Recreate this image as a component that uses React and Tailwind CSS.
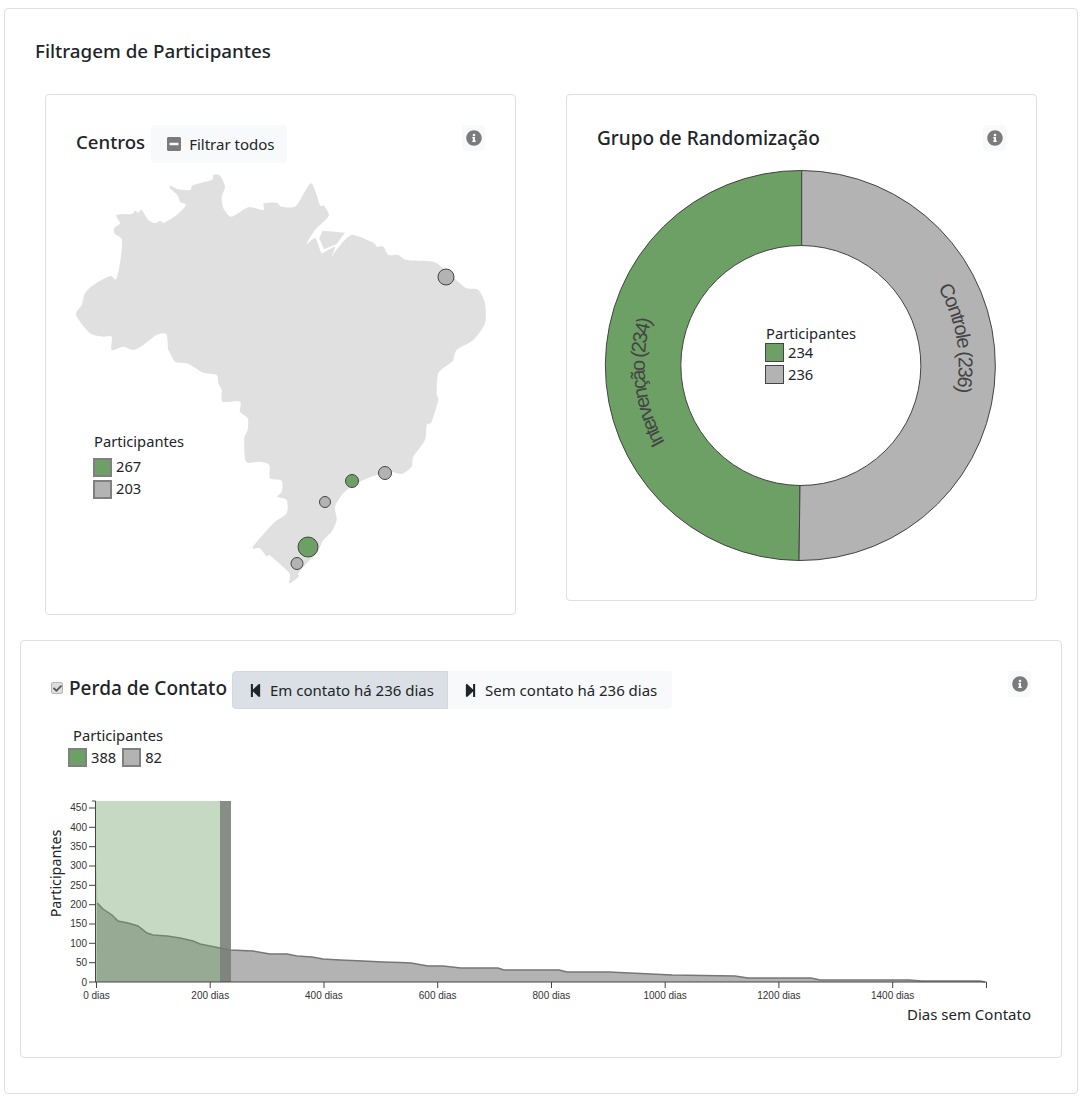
import React from "react";
import { FaInfoCircle, FaMinusSquare, FaStepBackward, FaStepForward, FaCheck } from "react-icons/fa";

const GREEN = "#6da064";
const GREY = "#b3b3b3";

const z1 = (pts) => pts.map(([x, y]) => [40 + x / 3, 90 + y / 3]);
const z2 = (pts) => pts.map(([x, y]) => [60 + x / 3, 350 + y / 3]);
const toStr = (pts) => pts.map(([x, y]) => `${x.toFixed(1)},${y.toFixed(1)}`).join(" ");

// Closed Catmull-Rom curve through the traced outline, so the coast is not faceted.
const smooth = (pts) => {
  const n = pts.length;
  let d = `M${pts[0][0].toFixed(1)},${pts[0][1].toFixed(1)}`;
  for (let i = 0; i < n; i++) {
    const p0 = pts[(i - 1 + n) % n], p1 = pts[i], p2 = pts[(i + 1) % n], p3 = pts[(i + 2) % n];
    const c1 = [p1[0] + (p2[0] - p0[0]) / 8, p1[1] + (p2[1] - p0[1]) / 8];
    const c2 = [p2[0] - (p3[0] - p1[0]) / 8, p2[1] - (p3[1] - p1[1]) / 8];
    d += ` C${c1[0].toFixed(1)},${c1[1].toFixed(1)} ${c2[0].toFixed(1)},${c2[1].toFixed(1)} ${p2[0].toFixed(1)},${p2[1].toFixed(1)}`;
  }
  return d + " Z";
};

const brazil = [
  ...z1([[108,675],[125,645],[135,610],[160,585],[210,558],[228,568],[240,520],[246,450],[225,432],[222,415],[240,400],[229,375],[275,372],[285,362],[295,368],[305,360],[325,390],[345,400],[360,392],[372,398],[410,375],[438,345],[420,335],[412,315],[390,295],[392,287],[415,298],[450,300],[460,285],[515,270],[520,255],[540,257],[555,290],[545,320],[550,355],[575,380],[625,352],[670,360],[672,340],[710,338],[725,350],[768,348],[813,280],[840,345],[852,347],[866,378],[825,420],[800,462],[826,445],[843,487],[850,488],[885,470],[875,500],[893,475],[935,435],[1000,458],[1010,470],[1030,470],[1045,495],[1075,495],[1100,510],[1180,515],[1215,540],[1260,580],[1280,595],[1315,600],[1335,640],[1335,700],[1300,750],[1250,780],[1240,810]]),
  ...z2([[1170,40],[1135,70],[1130,130],[1135,150],[1115,215],[1100,225],[1095,270],[1060,320],[1055,350],[1025,372],[990,365],[935,380],[890,400],[850,430],[825,470],[830,510],[815,545],[790,570],[770,610],[740,640],[715,670],[716,680],[688,700],[688,670],[640,625],[625,615],[620,620],[600,595],[578,592],[640,520],[680,490],[680,450],[652,440],[665,425],[665,392],[630,385],[628,345],[600,335],[558,335],[553,265],[563,240],[563,205],[540,185],[540,155],[488,155],[485,120],[475,100],[470,75],[430,68],[400,50],[380,40],[345,35],[325,0]]),
  ...z1([[385,810],[380,735],[350,735],[310,765],[280,780],[250,770],[215,780],[215,740],[190,740],[150,730]]),
];
const marajo = z1([[848,422],[915,428],[890,462],[852,478],[838,445]]);

const centers = [
  [446, 277, 8, GREY],
  [352, 481, 6.5, GREEN],
  [385, 473, 6.5, GREY],
  [325, 502, 5.5, GREY],
  [308, 547, 10, GREEN],
  [297, 563.5, 6, GREY],
];

const curve = [[96.7,860],[97.3,903],[103,909],[112,915],[118,921],[128,923],[138,926],[147,933],[153,935],[167,936],[180,938],[193,941],[200,944],[210,946],[220,948],[230,950],[253,951],[270,954],[287,954],[297,956],[312,957],[323,959],[340,960],[363,961],[383,962],[400,962.5],[411,963],[428,966],[443,966],[461,968],[498,968],[504,970],[559,970],[567,972],[609,972],[672,975],[735,976],[748,978],[785,978],[811,978],[820,980],[909,980],[922,981],[980,981],[985,982]];

const yTicks = [0, 50, 100, 150, 200, 250, 300, 350, 400, 450];
const xTicks = [0, 200, 400, 600, 800, 1000, 1200, 1400];

function InfoButton() {
  return (
    <button className="flex h-[26px] w-[23px] items-center justify-center rounded bg-[#f8f9fa] text-[#7b7b7b]">
      <FaInfoCircle className="h-4 w-4" />
    </button>
  );
}

function Swatch({ color, border = "border-2 border-[#808080]" }) {
  return <span className={`block h-[19px] w-[19px] ${border}`} style={{ backgroundColor: color }} />;
}

function LegendRow({ color, border, value, numPad = "pb-[2px]" }) {
  return (
    <div className="flex h-[19px] items-center gap-[4px]">
      <Swatch color={color} border={border} />
      <span className={numPad}>{value}</span>
    </div>
  );
}

function Legend({ a, b, border, titleClass, numPad }) {
  return (
    <div className="text-[14.7px] leading-[20px] text-[#212529]">
      <div className={`pl-[1px] ${titleClass}`}>Participantes</div>
      <div className="flex flex-col gap-[3px]">
        <LegendRow color={GREEN} border={border} value={a} numPad={numPad} />
        <LegendRow color={GREY} border={border} value={b} numPad={numPad} />
      </div>
    </div>
  );
}

function BrazilMap() {
  return (
    <svg viewBox="46 165 469 448" className="block h-[448px] w-[469px]">
      <path d={smooth(brazil)} fill="#e0e0e0" />
      <polygon points={toStr(marajo)} fill="#e0e0e0" />
      {centers.map(([cx, cy, r, fill], i) => (
        <circle key={i} cx={cx} cy={cy} r={r} fill={fill} stroke="#444" strokeWidth="1" />
      ))}
    </svg>
  );
}

function Donut() {
  const cx = 801.7, cy = 365.5, R = 195, r = 120;
  const greenArc = `M${cx},170.5 A${R},${R} 0 0 0 799,560.5 L800,485.5 A${r},${r} 0 0 1 ${cx},245.5 Z`;
  const greyArc = `M${cx},170.5 A${R},${R} 0 0 1 799,560.5 L800,485.5 A${r},${r} 0 0 0 ${cx},245.5 Z`;
  return (
    <svg viewBox="567 165 469 400" className="block h-[400px] w-[469px]">
      <defs>
        <path id="ringRight" d={`M${cx},${cy - 157} A157,157 0 0 1 ${cx},${cy + 157}`} />
        <path id="ringLeft" d={`M${cx},${cy + 157} A157,157 0 0 1 ${cx},${cy - 157}`} />
      </defs>
      <path d={greenArc} fill={GREEN} stroke="#444" strokeWidth="1" />
      <path d={greyArc} fill={GREY} stroke="#444" strokeWidth="1" />
      <text fontSize="20" fill="#444" fontFamily="'Liberation Sans', sans-serif" letterSpacing="-1.5">
        <textPath href="#ringRight" startOffset="165">Controle (236)</textPath>
      </text>
      <text fontSize="20" fill="#444" fontFamily="'Liberation Sans', sans-serif" letterSpacing="-1.85">
        <textPath href="#ringLeft" startOffset="166">Intervenção (234)</textPath>
      </text>
    </svg>
  );
}

function LossChart() {
  const xScale = (d) => 96.5 + d * 0.5687;
  const yScale = (v) => 982 - v * 0.3867;
  return (
    <svg viewBox="21 790 1040 240" className="block h-[240px] w-[1040px]">
      <path d={`M96.5,982 ${curve.map(([x, y]) => `L${x},${y}`).join(" ")} L986,982 Z`} fill={GREY} />
      <polyline points={toStr(curve.slice(1))} fill="none" stroke="#777" strokeWidth="1.5" />
      <rect x="96" y="801" width="124" height="181" fill={GREEN} fillOpacity="0.39" />
      <rect x="220" y="801" width="11" height="181" fill="#757e74" fillOpacity="0.88" />
      <g stroke="#444" strokeWidth="1" fill="none">
        <path d="M95.5,801 V982 H986.5 V988" />
        <path d="M95.5,801 H92" />
        {yTicks.map((v) => <path key={v} d={`M89,${yScale(v).toFixed(1)} H96`} />)}
        {xTicks.map((d) => <path key={d} d={`M${xScale(d).toFixed(1)},982 V988`} />)}
      </g>
      <g fontFamily="'Liberation Sans', sans-serif" fontSize="10" fill="#333">
        {yTicks.map((v) => (
          <text key={v} x="87" y={yScale(v) + 3.5} textAnchor="end">{v}</text>
        ))}
        {xTicks.map((d) => (
          <text key={d} x={xScale(d)} y="999" textAnchor="middle">{d} dias</text>
        ))}
      </g>
      <text x="61" y="873.5" transform="rotate(-90 61 873.5)" textAnchor="middle" fontSize="14.3" fill="#212529" fontFamily="'Noto Sans', sans-serif">Participantes</text>
      <text x="1031" y="1020" textAnchor="end" fontSize="15" fill="#212529" fontFamily="'Noto Sans', sans-serif">Dias sem Contato</text>
    </svg>
  );
}

export default function App() {
  return (
    <div className="h-[1097px] w-[1082px] bg-white pt-[8px] pl-[4px] font-['Noto_Sans',sans-serif] text-[#212529]">
      <div className="h-[1086px] w-[1074px] rounded border border-[#dfdfdf] pl-[15px]">
        <h1 className="pt-[28px] pl-[15px] text-[18.8px] leading-[28px] font-medium">Filtragem de Participantes</h1>

        <div className="mt-[29px] flex items-start gap-[50px] pl-[25px]">
          <div className="relative h-[521px] w-[471px] rounded border border-[#dfdfdf]">
            <div className="flex h-[70px] items-start justify-between pt-[30px] pr-[30px] pl-[30px]">
              <div className="flex items-start gap-[6px]">
                <h2 className="pt-[2px] text-[18.6px] leading-[30px] font-medium">Centros</h2>
                <button className="flex h-[38px] w-[136px] items-center gap-[7px] rounded bg-[#f8f9fa] pl-[15px] text-[15px] whitespace-nowrap">
                  <FaMinusSquare className="h-4 w-4 text-[#7b7b7b]" />
                  Filtrar todos
                </button>
              </div>
              <InfoButton />
            </div>
            <BrazilMap />
            <div className="absolute top-[336px] left-[47px]">
              <Legend a="267" b="203" titleClass="mb-[7px]" numPad="pb-[4px]" />
            </div>
          </div>

          <div className="relative h-[507px] w-[471px] rounded border border-[#dfdfdf]">
            <div className="flex h-[70px] items-start justify-between pt-[30px] pr-[30px] pl-[30px]">
              <h2 className="text-[19px] leading-[26px] font-medium">Grupo de Randomização</h2>
              <InfoButton />
            </div>
            <Donut />
            <div className="absolute top-[229px] left-[198px]">
              <Legend a="234" b="236" border="border border-[#444]" titleClass="h-[19px] leading-[19px]" numPad="pb-[2px]" />
            </div>
          </div>
        </div>

        <div className="mt-[25px] h-[418px] w-[1042px] rounded border border-[#dfdfdf]">
          <div className="flex h-[68px] items-start justify-between pt-[30px] pr-[30px] pl-[30px]">
            <div className="flex items-start">
              <span className="mt-[11px] flex h-[12px] w-[12px] items-center justify-center rounded-[2px] border border-[#b5b5b5] bg-[#dedede] text-[#555]">
                <FaCheck className="h-[9px] w-[9px]" />
              </span>
              <h2 className="ml-[6px] text-[19px] leading-[34px] font-medium whitespace-nowrap">Perda de Contato</h2>
              <div className="ml-[5px] flex text-[15px]">
                <button className="flex h-[38px] w-[216px] items-center gap-[8px] rounded-l border border-[#d3d9df] bg-[#dae0e5] pl-[16px] whitespace-nowrap">
                  <FaStepBackward className="h-[15px] w-[13px]" />
                  Em contato há 236 dias
                </button>
                <button className="flex h-[38px] w-[224px] items-center gap-[8px] rounded-r bg-[#f8f9fa] pl-[16px] whitespace-nowrap">
                  <FaStepForward className="h-[15px] w-[13px]" />
                  Sem contato há 236 dias
                </button>
              </div>
            </div>
            <InfoButton />
          </div>
          <div className="mt-[16px] ml-[47px] text-[14.7px] leading-[20px]">
            <div className="ml-[5px]">Participantes</div>
            <div className="mt-[3px] flex h-[19px] items-center gap-[6px]">
              <LegendRow color={GREEN} value="388" />
              <LegendRow color={GREY} value="82" />
            </div>
          </div>
          <div className="mt-[23px]">
            <LossChart />
          </div>
        </div>
      </div>
    </div>
  );
}
